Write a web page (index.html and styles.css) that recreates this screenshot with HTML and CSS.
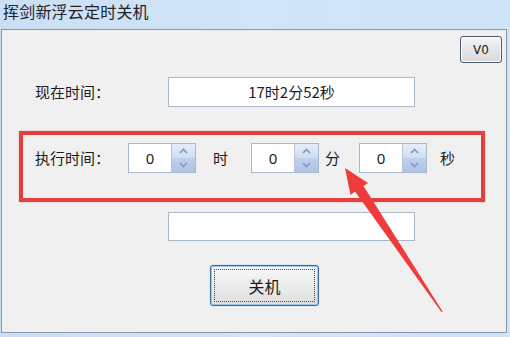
FILE: index.html
```html
<!DOCTYPE html>
<html lang="zh">
<head>
<meta charset="utf-8">
<link rel="stylesheet" href="styles.css">
</head>
<body>
<div class="window">
  <div class="titlebar">挥剑新浮云定时关机</div>
  <div class="client">
    <div class="toprow"><button class="btn-v">V0</button></div>
    <div class="row">
      <span class="label label-now">现在时间：</span>
      <div class="textbox">17时2分52秒</div>
    </div>
    <div class="redbox">
      <div class="exec-row">
        <span class="label label-exec">执行时间：</span>
        <div class="spin">
          <div class="spin-val">0</div>
          <div class="spin-btns">
            <div class="spin-up"><svg width="9" height="6" viewBox="0 0 9 6"><path d="M1 5 L4.5 1.5 L8 5" fill="none" stroke="#8398bb" stroke-width="1.7"/></svg></div>
            <div class="spin-down"><svg width="9" height="6" viewBox="0 0 9 6"><path d="M1 1 L4.5 4.5 L8 1" fill="none" stroke="#8398bb" stroke-width="1.7"/></svg></div>
          </div>
        </div>
        <span class="unit unit-h">时</span>
        <div class="spin">
          <div class="spin-val">0</div>
          <div class="spin-btns">
            <div class="spin-up"><svg width="9" height="6" viewBox="0 0 9 6"><path d="M1 5 L4.5 1.5 L8 5" fill="none" stroke="#8398bb" stroke-width="1.7"/></svg></div>
            <div class="spin-down"><svg width="9" height="6" viewBox="0 0 9 6"><path d="M1 1 L4.5 4.5 L8 1" fill="none" stroke="#8398bb" stroke-width="1.7"/></svg></div>
          </div>
        </div>
        <span class="unit unit-m">分</span>
        <div class="spin">
          <div class="spin-val">0</div>
          <div class="spin-btns">
            <div class="spin-up"><svg width="9" height="6" viewBox="0 0 9 6"><path d="M1 5 L4.5 1.5 L8 5" fill="none" stroke="#8398bb" stroke-width="1.7"/></svg></div>
            <div class="spin-down"><svg width="9" height="6" viewBox="0 0 9 6"><path d="M1 1 L4.5 4.5 L8 1" fill="none" stroke="#8398bb" stroke-width="1.7"/></svg></div>
          </div>
        </div>
        <span class="unit unit-s">秒</span>
      </div>
    </div>
    <div class="textbox textbox-empty"></div>
    <button class="btn-off"><span class="focus">关机</span></button>
  </div>
  <div class="bottomstrip"></div>
  <svg class="arrow" width="510" height="337" viewBox="0 0 510 337">
    <polygon points="345,168 368,183 363.5,186 442.6,311.6 441.6,312.3 355,191.5 350.5,195" fill="#ef3b3b"/>
  </svg>
</div>
</body>
</html>
```
FILE: styles.css
```css
html, body {
  margin: 0;
  padding: 0;
}
body {
  width: 510px;
  height: 337px;
  overflow: hidden;
  background: #cde1f6;
  font-family: "Noto Sans CJK SC", "Noto Sans", sans-serif;
  color: #1c1c1c;
}
.window {
  position: relative;
  width: 510px;
  height: 337px;
  display: flex;
  flex-direction: column;
  background: linear-gradient(90deg, #cbdff4 0%, #d2e4f7 50%, #cfe3f9 100%);
}
.titlebar {
  height: 29px;
  box-sizing: border-box;
  padding: 0 0 0 3px;
  font-size: 16px;
  line-height: 23px;
  color: #202428;
  letter-spacing: 0.2px;
}
.client {
  margin-left: 1px;
  width: 504px;
  height: 302px;
  border: 1px solid #8996a5;
  background: #f0f0f0;
  display: flex;
  flex-direction: column;
  align-items: flex-start;
}
.toprow {
  align-self: stretch;
  display: flex;
  justify-content: flex-end;
  padding: 6px 4px 0 0;
}
.btn-v {
  width: 42px;
  height: 27px;
  box-sizing: border-box;
  border: 1px solid #4b5a6c;
  border-radius: 3px;
  background: linear-gradient(#f5f5f5, #e6e6e6 50%, #dadada);
  box-shadow: inset 0 0 0 1px #fbfbfb;
  font-family: "DejaVu Sans", sans-serif;
  font-size: 12px;
  color: #1a1a1a;
  padding: 0;
}
.row {
  margin-top: 14px;
  display: flex;
  align-items: center;
  padding-left: 33px;
}
.label {
  font-size: 15px;
  line-height: 20px;
  color: #1c1c1c;
}
.label-now {
  width: 133px;
}
.textbox {
  width: 247px;
  height: 30px;
  box-sizing: border-box;
  border: 1px solid #a9b9cb;
  background: #ffffff;
  font-size: 15px;
  line-height: 28px;
  text-align: center;
  color: #1c1c1c;
}
.redbox {
  margin-top: 24px;
  margin-left: 17px;
  width: 466px;
  height: 71px;
  box-sizing: border-box;
  border: 4px solid #e2403f;
  box-shadow: 0 0 1px #e86a6a;
  padding: 8px 0 0 12px;
}
.exec-row {
  display: flex;
  align-items: center;
}
.label-exec {
  width: 93px;
}
.spin {
  width: 68px;
  height: 30px;
  box-sizing: border-box;
  border: 1px solid #a9b9cb;
  display: flex;
  background: #fff;
}
.spin-val {
  width: 42px;
  font-size: 15px;
  line-height: 28px;
  text-align: center;
  font-family: "Noto Sans", sans-serif;
}
.spin-btns {
  flex: 1;
  border-left: 1px solid #b8c7da;
  display: flex;
  flex-direction: column;
}
.spin-up, .spin-down {
  flex: 1;
  display: flex;
  align-items: center;
  justify-content: center;
}
.spin-up {
  background: linear-gradient(#e6edf8, #cfdcf0);
}
.spin-down {
  background: linear-gradient(#bfd0ec, #aec3e7);
}
.unit {
  font-size: 15px;
  line-height: 20px;
}
.unit-h { margin: 0 23px 0 17px; }
.unit-m { margin: 0 19px 0 6px; }
.unit-s { margin-left: 13px; }
.textbox-empty {
  margin-top: 10px;
  margin-left: 166px;
  height: 29px;
}
.btn-off {
  margin-top: 24px;
  margin-left: 208px;
  width: 109px;
  height: 41px;
  box-sizing: border-box;
  border: 1px solid #3a6a9e;
  border-radius: 3px;
  background: linear-gradient(#f7f7f7, #ececec 50%, #dedede);
  box-shadow: inset 0 0 0 1px #9fc6e6, 0 0 1px #7fa8cf;
  padding: 3px;
  font-family: "Noto Sans CJK SC", sans-serif;
  font-size: 16px;
  color: #1a1a1a;
  display: flex;
}
.focus {
  flex: 1;
  border: 1px dotted #444;
  display: flex;
  align-items: center;
  justify-content: center;
}
.bottomstrip {
  flex: 1;
}
.arrow {
  position: absolute;
  left: 0;
  top: 0;
  pointer-events: none;
}
```
